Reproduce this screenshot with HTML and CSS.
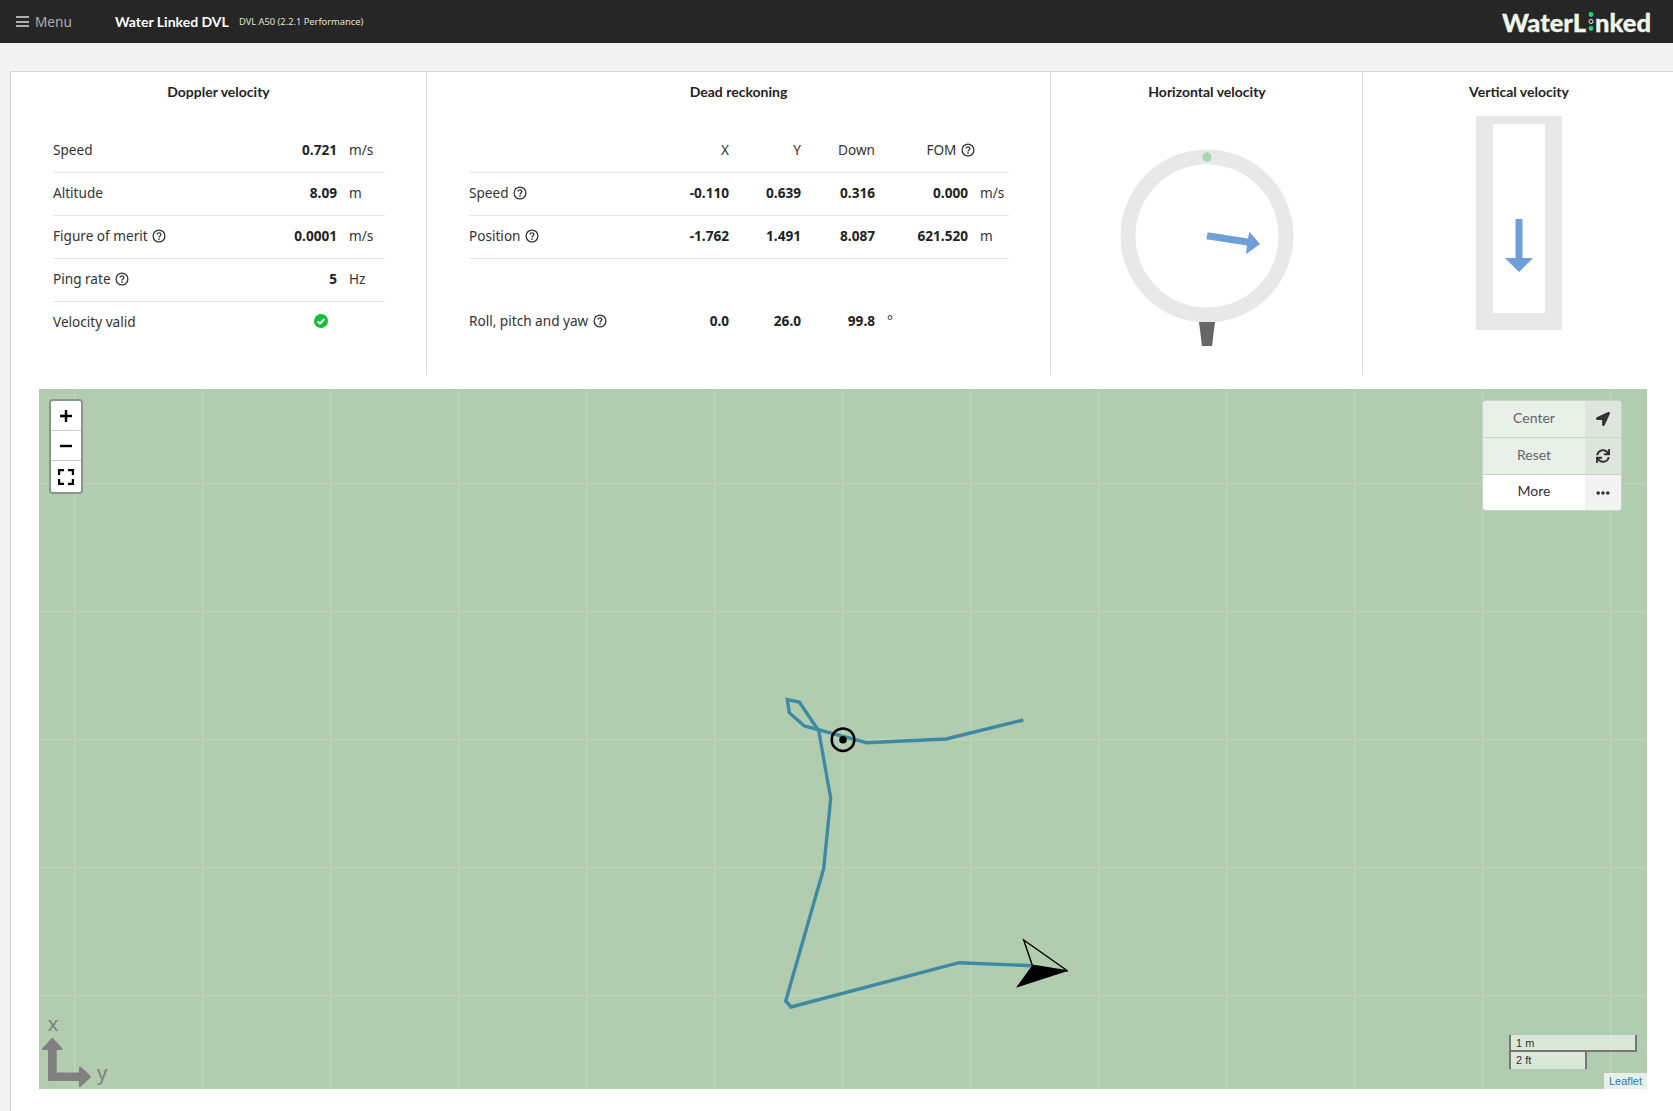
FILE: index.html
```html
<!DOCTYPE html>
<html lang="en">
<head>
<meta charset="UTF-8">
<meta name="viewport" content="width=device-width, initial-scale=1.0">
<title>Water Linked DVL</title>
<link rel="stylesheet" href="styles.css">
</head>
<body>

<svg class="defs" width="0" height="0">
    <symbol id="help" viewBox="0 0 14 14">
        <circle cx="7" cy="7" r="5.9" fill="none" stroke="currentColor" stroke-width="1.3"/>
        <path d="M5.1 5.6c0-1.1.9-1.8 1.9-1.8s1.9.7 1.9 1.7c0 1.5-1.9 1.4-1.9 2.9" fill="none" stroke="currentColor" stroke-width="1.3"/>
        <circle cx="7" cy="10.1" r=".85" fill="currentColor"/>
    </symbol>
</svg>

<header class="topbar">
    <div class="menu-toggle">
        <span class="burger"><i></i><i></i><i></i></span>
        <span>Menu</span>
    </div>
    <div class="app-title">Water Linked DVL</div>
    <div class="app-version">DVL A50 (2.2.1 Performance)</div>
    <div class="logo">WaterL<svg class="logo-dots" viewBox="0 0 8 21" width="8" height="21"><circle cx="4" cy="3.5" r="2.4" fill="#1fd66f"/><circle cx="4" cy="10.5" r="2" fill="none" stroke="#eef7ea" stroke-width="1"/><circle cx="4" cy="17.5" r="2.4" fill="#1fd66f"/></svg>nked</div>
</header>

<main class="page">
    <div class="content">
        <section class="panels">
            <div class="panel">
                <h3 class="panel-title">Doppler velocity</h3>
                <table class="data doppler">
                    <tr><td class="label">Speed</td><td class="val">0.721</td><td class="unit">m/s</td></tr>
                    <tr><td class="label">Altitude</td><td class="val">8.09</td><td class="unit">m</td></tr>
                    <tr><td class="label">Figure of merit <svg class="help"><use href="#help"/></svg></td><td class="val">0.0001</td><td class="unit">m/s</td></tr>
                    <tr><td class="label">Ping rate <svg class="help"><use href="#help"/></svg></td><td class="val">5</td><td class="unit">Hz</td></tr>
                    <tr class="last">
                        <td class="label">Velocity valid</td>
                        <td class="val check-cell">
                            <svg class="check" viewBox="0 0 14 14"><circle cx="7" cy="7" r="7" fill="#12bf35"/><path d="M3.6 7.2l2.4 2.4 4.4-4.6" fill="none" stroke="#fff" stroke-width="2"/></svg>
                        </td>
                        <td class="unit"></td>
                    </tr>
                </table>
            </div>

            <div class="panel">
                <h3 class="panel-title">Dead reckoning</h3>
                <table class="data reckoning">
                    <colgroup><col class="c-label"><col class="c-x"><col class="c-y"><col class="c-down"><col class="c-fom"><col></colgroup>
                    <tr><td></td><td class="head">X</td><td class="head">Y</td><td class="head">Down</td><td class="head">FOM <svg class="help"><use href="#help"/></svg></td><td></td></tr>
                    <tr><td class="label">Speed <svg class="help"><use href="#help"/></svg></td><td class="val">-0.110</td><td class="val">0.639</td><td class="val">0.316</td><td class="val">0.000</td><td class="unit">m/s</td></tr>
                    <tr><td class="label">Position <svg class="help"><use href="#help"/></svg></td><td class="val">-1.762</td><td class="val">1.491</td><td class="val">8.087</td><td class="val">621.520</td><td class="unit">m</td></tr>
                    <tr class="spacer"><td colspan="6"></td></tr>
                    <tr class="last"><td class="label">Roll, pitch and yaw <svg class="help"><use href="#help"/></svg></td><td class="val">0.0</td><td class="val">26.0</td><td class="val">99.8</td><td class="unit" colspan="2">°</td></tr>
                </table>
            </div>

            <div class="panel horizontal">
                <h3 class="panel-title">Horizontal velocity</h3>
                <svg class="gauge" viewBox="0 0 200 230" width="200" height="230">
                    <circle cx="100" cy="107" r="79" fill="none" stroke="#e8e8e8" stroke-width="15"/>
                    <circle cx="100" cy="28" r="4.7" fill="#a8d8b0"/>
                    <polygon points="92,193 108,193 105,217 95,217" fill="#666"/>
                    <polygon points="100.6,103.2 141,109.6 142.4,102.7 153,115 138.9,125.3 140,116.6 99.4,110.2" fill="#6f9fd8"/>
                </svg>
            </div>

            <div class="panel vertical">
                <h3 class="panel-title tight">Vertical velocity</h3>
                <svg class="vbar" viewBox="0 0 86 214" width="86" height="214">
                    <rect x="0" y="0" width="86" height="214" fill="#e8e8e8"/>
                    <rect x="17" y="8" width="52" height="189" fill="#fff"/>
                    <polygon points="39.5,103 46.5,103 46.5,142 57,142 43,156 29,142 39.5,142" fill="#6f9fd8"/>
                </svg>
            </div>
        </section>

        <section class="map">
            <svg class="map-canvas" viewBox="39 389 1608 700" width="1608" height="700">
                <g class="grid">
                    <path d="M75 389V1089M203 389V1089M331 389V1089M459 389V1089M587 389V1089M715 389V1089M843 389V1089M971 389V1089M1099 389V1089M1227 389V1089M1355 389V1089M1483 389V1089M1611 389V1089"/>
                    <path d="M39 483.5H1647M39 611.5H1647M39 739.5H1647M39 867.5H1647M39 995.5H1647"/>
                </g>
                <polyline class="track" points="1023.3,720 946,739 866.7,742.7 804.3,726 789.3,712.7 787.3,699.7 799.3,702 818.7,730.7 830.7,798.3 823.7,868.5 785.7,1001 791,1007 959,962.7 1031.7,965.7"/>
                <circle cx="843" cy="739.7" r="11.3" fill="none" stroke="#000" stroke-width="2.5"/>
                <circle cx="843" cy="739.7" r="3.8" fill="#000"/>
                <polygon points="1032.3,965.3 1067.7,971 1016,987.7" fill="#000"/>
                <polygon points="1023.7,940 1067.7,971 1032.3,965.3" fill="none" stroke="#000" stroke-width="1.4"/>
                <g class="axes">
                    <polygon points="52.3,1039 61.5,1049 55.7,1049 55.7,1073.5 80,1073.5 80,1067.5 90,1076.8 80,1086 80,1080 49,1080 49,1049 43,1049"/>
                    <text x="53" y="1031">x</text>
                    <text x="102" y="1080">y</text>
                </g>
            </svg>

            <div class="zoom-box">
                <div class="zoom-btn">
                    <svg width="14" height="14" viewBox="0 0 14 14"><path d="M7 1V13M1 7H13" stroke="#000" stroke-width="2.4"/></svg>
                </div>
                <div class="zoom-btn">
                    <svg width="14" height="14" viewBox="0 0 14 14"><path d="M1 7H13" stroke="#000" stroke-width="2.4"/></svg>
                </div>
                <div class="zoom-btn">
                    <svg width="16" height="16" viewBox="0 0 16 16"><path d="M1 6V1H6M10 1H15V6M15 10V15H10M6 15H1V10" fill="none" stroke="#000" stroke-width="2.4"/></svg>
                </div>
            </div>

            <div class="map-menu">
                <div class="map-item off">
                    <span class="map-item-text">Center</span>
                    <span class="map-item-icon"><svg width="14" height="14" viewBox="0 0 512 512"><path d="M444.52 3.52L28.74 195.42c-47.97 22.39-31.98 92.75 19.19 92.75h175.91v175.91c0 51.17 70.36 67.17 92.75 19.19l191.9-415.78c15.99-38.39-25.59-79.97-63.97-63.97z"/></svg></span>
                </div>
                <div class="map-item off">
                    <span class="map-item-text">Reset</span>
                    <span class="map-item-icon"><svg width="14" height="14" viewBox="0 0 512 512"><path d="M440.65 12.57l4 82.77A247.16 247.16 0 0 0 255.83 8C134.73 8 33.91 94.92 12.29 209.82A12 12 0 0 0 24.09 224h49.05a12 12 0 0 0 11.67-9.26 175.91 175.91 0 0 1 317-56.94l-101.46-4.86a12 12 0 0 0-12.57 12v47.41a12 12 0 0 0 12 12H500a12 12 0 0 0 12-12V12a12 12 0 0 0-12-12h-47.37a12 12 0 0 0-11.98 12.57zM255.83 432a175.61 175.61 0 0 1-146-77.8l101.8 4.87a12 12 0 0 0 12.57-12v-47.4a12 12 0 0 0-12-12H12a12 12 0 0 0-12 12V500a12 12 0 0 0 12 12h47.35a12 12 0 0 0 12-12.6l-4.15-82.57A247.17 247.17 0 0 0 255.83 504c121.11 0 221.93-86.92 243.55-201.82a12 12 0 0 0-11.8-14.18h-49.05a12 12 0 0 0-11.67 9.26A175.86 175.86 0 0 1 255.83 432z"/></svg></span>
                </div>
                <div class="map-item">
                    <span class="map-item-text">More</span>
                    <span class="map-item-icon"><svg width="14" height="14" viewBox="0 0 14 14"><circle cx="2.2" cy="7" r="1.8"/><circle cx="7" cy="7" r="1.8"/><circle cx="11.8" cy="7" r="1.8"/></svg></span>
                </div>
            </div>

            <div class="scale">
                <div class="scale-line metric">1 m</div>
                <div class="scale-line imperial">2 ft</div>
            </div>
            <div class="attribution">Leaflet</div>
        </section>
    </div>
</main>

</body>
</html>
```

FILE: styles.css
```css
body {
    margin: 0;
    background-color: #f2f2f2;
    font-family: "Noto Sans", sans-serif;
    font-size: 13.6px;
    color: #333;
}

.defs {
    position: absolute;
}

/* top bar */
.topbar {
    height: 43px;
    background-color: #262626;
    display: flex;
    align-items: center;
    padding: 0 22px 0 16px;
}

.menu-toggle {
    display: flex;
    align-items: center;
    gap: 6px;
    width: 99px;
    color: #aeaeae;
    font-size: 13.6px;
}

.burger {
    display: flex;
    flex-direction: column;
    gap: 2.5px;
    width: 13px;
}

.burger i {
    display: block;
    height: 2px;
    background-color: #aeaeae;
}

.app-title {
    font-family: Lato, sans-serif;
    font-weight: 700;
    font-size: 14px;
    color: #fff;
    width: 124px;
}

.app-version {
    font-size: 9.3px;
    color: #e2e2d0;
    flex: 1;
}

.logo {
    display: flex;
    align-items: center;
    font-family: Lato, sans-serif;
    font-weight: 900;
    font-size: 25.5px;
    color: #eef7ea;
    -webkit-text-stroke: 0.3px #eef7ea;
}

.logo-dots {
    margin: 0 0 0 1px;
}

/* readouts */
.page {
    padding: 28px 0 0 10px;
}

.content {
    background-color: #fff;
    border-top: 1px solid #d9d9d9;
    border-left: 1px solid #d9d9d9;
    padding-bottom: 22px;
}

.panels {
    display: grid;
    grid-template-columns: 415px 624px 312px 1fr;
    height: 303px;
}

.panel {
    border-left: 1px solid #dcdcdc;
    text-align: center;
}

.panel:first-child {
    border-left: none;
}

.panel.horizontal {
    padding-left: 1px;
}

.panel.vertical {
    padding-left: 2px;
}

.panel-title {
    font-family: Lato, sans-serif;
    font-size: 14px;
    font-weight: 700;
    line-height: 20px;
    color: #222;
    margin: 10px 0 27px;
}

.panel-title.tight {
    margin-bottom: 14px;
}

.data {
    border-collapse: collapse;
    table-layout: fixed;
    text-align: left;
}

.data tr {
    height: 43px;
    border-bottom: 1px solid #e6e6e6;
}

.data tr.last,
.data tr.spacer {
    border-bottom: none;
}

.data tr.spacer {
    height: 42px;
}

.data td {
    padding: 0 0 2px;
}

.data tr.last td {
    padding-bottom: 3px;
}

.doppler {
    width: 332px;
    margin-left: 42px;
}

.doppler .label {
    width: 200px;
}

.doppler .val {
    width: 84px;
}

.reckoning {
    width: 540px;
    margin-left: 42px;
}

.c-label { width: 200px; }
.c-x { width: 60px; }
.c-y { width: 72px; }
.c-down { width: 74px; }
.c-fom { width: 93px; }

.val {
    font-weight: 700;
    text-align: right;
    color: #222;
}

.head {
    text-align: right;
}

.head .help {
    margin-right: -7px;
}

.data .unit {
    padding-left: 12px;
}

.data .check-cell {
    padding-right: 9px;
    line-height: 0;
}

.check {
    width: 14px;
    height: 14px;
}

.help {
    width: 14px;
    height: 14px;
    vertical-align: -2px;
    margin-left: 1px;
}

.gauge,
.vbar {
    display: block;
    margin: 0 auto;
}

/* map */
.map {
    position: relative;
    width: 1608px;
    height: 700px;
    margin: 14px 0 0 28px;
    background-color: #b2ccb0;
    overflow: hidden;
}

.map-canvas {
    display: block;
}

.grid path {
    fill: none;
    stroke: #bad3b8;
    stroke-width: 2;
}

.track {
    fill: none;
    stroke: #3f8aa3;
    stroke-width: 3.4;
}

.axes polygon {
    fill: #808080;
    stroke: #808080;
    stroke-width: 2;
    stroke-linejoin: round;
}

.axes text {
    fill: #808080;
    font-family: "Noto Sans", sans-serif;
    font-size: 20px;
    text-anchor: middle;
}

.zoom-box {
    position: absolute;
    top: 10px;
    left: 10px;
    width: 30px;
    border: 2px solid rgba(0, 0, 0, 0.25);
    border-radius: 4px;
    background-clip: padding-box;
}

.zoom-btn {
    height: 29px;
    background-color: #fff;
    border-bottom: 1px solid #ccc;
    display: flex;
    align-items: center;
    justify-content: center;
}

.zoom-btn:first-child {
    border-radius: 2px 2px 0 0;
}

.zoom-btn:last-child {
    border-bottom: none;
    height: 31px;
    border-radius: 0 0 2px 2px;
}

.map-menu {
    position: absolute;
    top: 11px;
    left: 1443px;
    width: 138px;
    border: 1px solid #c6d6c4;
    border-radius: 4px;
    overflow: hidden;
    font-family: Lato, sans-serif;
    font-size: 14px;
}

.map-item {
    display: flex;
    height: 36px;
    background-color: #fff;
    color: #333;
    border-bottom: 1px solid #c6d6c4;
}

.map-item:last-child {
    border-bottom: none;
    height: 35px;
}

.map-item.off {
    background-color: #e8f0e8;
    color: #666;
}

.map-item-text {
    flex: 1;
    display: flex;
    align-items: center;
    justify-content: center;
    padding-bottom: 4px;
}

.map-item-icon {
    width: 36px;
    background-color: #f3f3f3;
    fill: #333;
    display: flex;
    align-items: center;
    justify-content: center;
}

.map-item.off .map-item-icon {
    background-color: #dde5dc;
}

.scale {
    position: absolute;
    top: 646px;
    left: 1470px;
    font-family: "Liberation Sans", sans-serif;
    font-size: 11px;
    color: #333;
}

.scale-line {
    box-sizing: border-box;
    height: 17px;
    line-height: 16px;
    padding-left: 5px;
    border: 2px solid #777;
    border-top: none;
    background-color: rgba(255, 255, 255, 0.5);
}

.scale-line.metric {
    width: 128px;
}

.scale-line.imperial {
    width: 78px;
    border-bottom: none;
    border-top: none;
}

.attribution {
    position: absolute;
    right: 0;
    bottom: 0;
    padding: 0 5px;
    height: 16px;
    line-height: 16px;
    font-family: "Liberation Sans", sans-serif;
    font-size: 11px;
    color: #2b7cb8;
    background-color: rgba(255, 255, 255, 0.7);
}
```
